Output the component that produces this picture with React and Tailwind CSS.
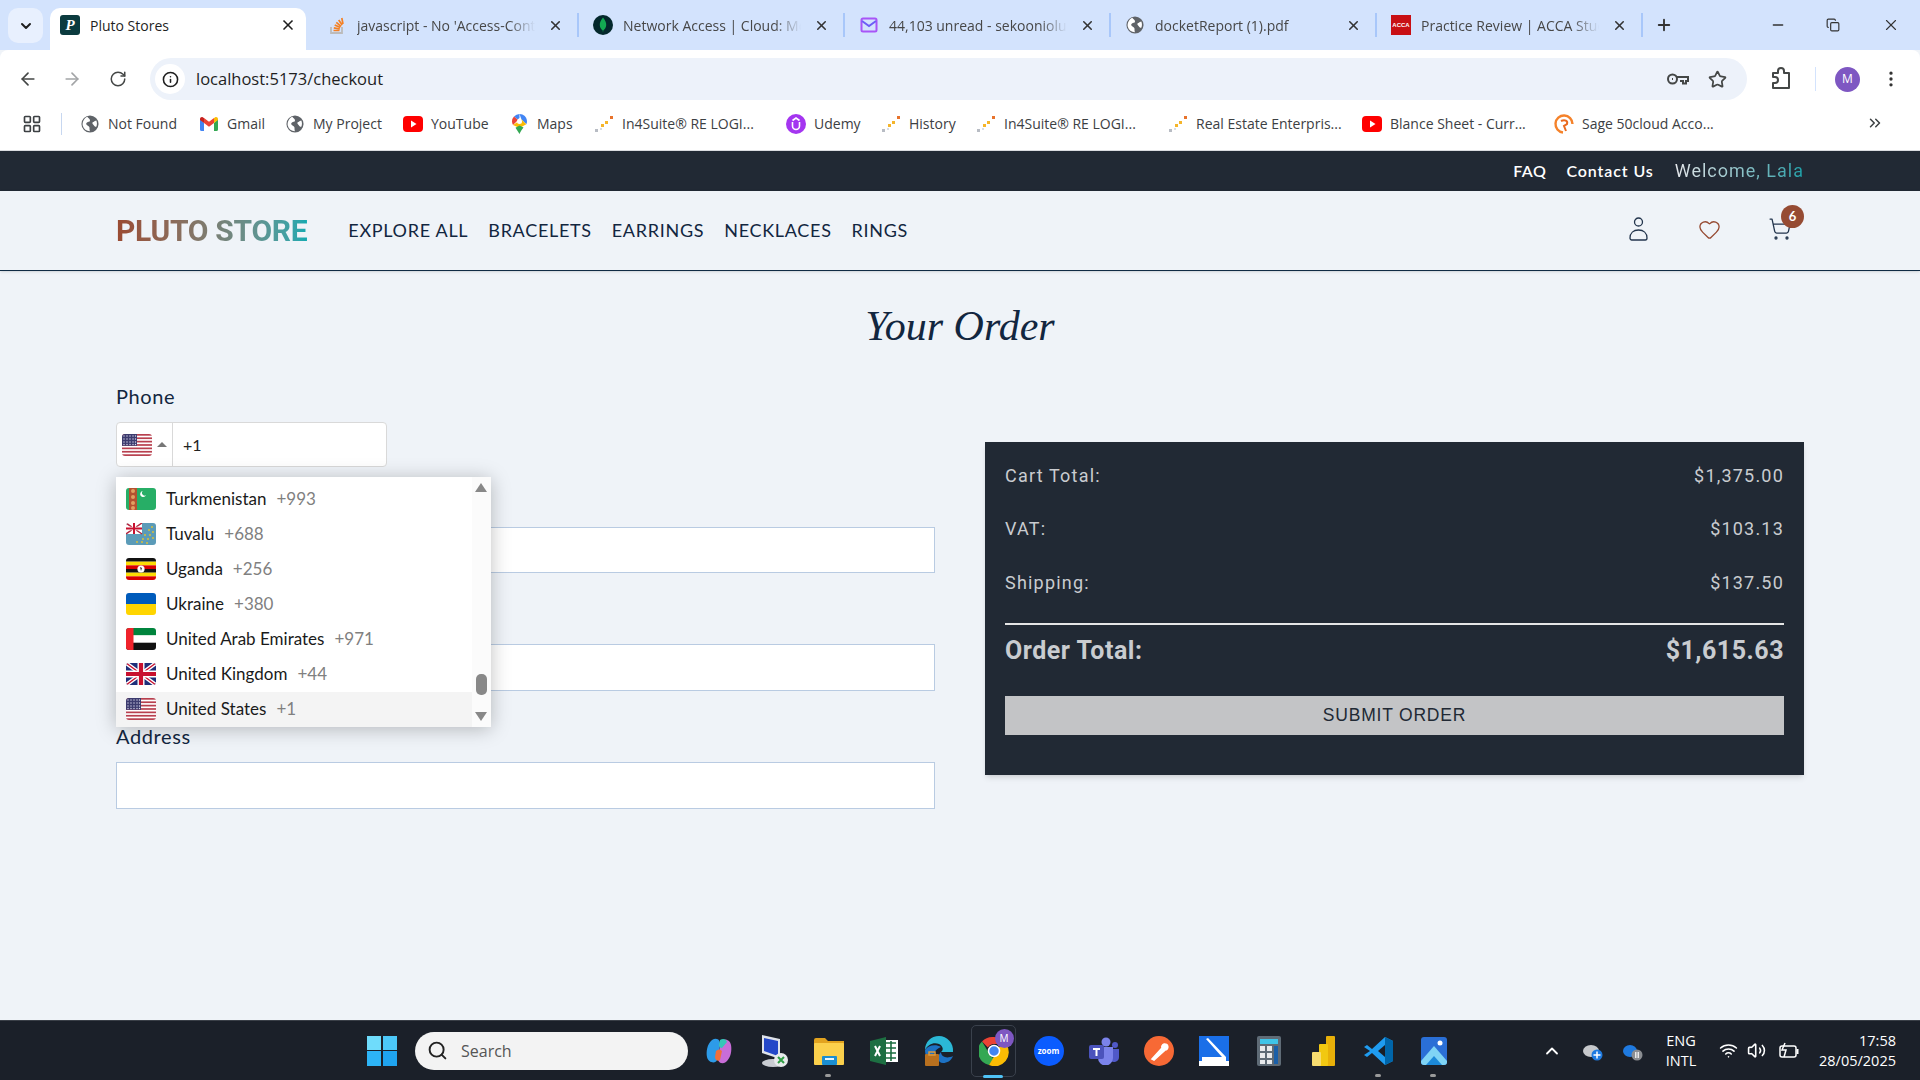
import {
  ArrowLeft, ArrowRight, RotateCw, Info, Star, EllipsisVertical, X, Plus, Minus, Copy,
  ChevronDown, ChevronsRight, LayoutGrid, Search, ChevronUp, Wifi, Volume2, Heart, ShoppingCart,
} from "lucide-react";

const PlutoIcon = () => (
  <div className="w-5 h-5 rounded-[3px] bg-[#0b3b3f] text-white flex items-center justify-center font-['Liberation_Serif',serif] italic font-bold text-[15px]">P</div>
);
const StackIcon = () => (
  <svg width="20" height="20" viewBox="0 0 20 20" fill="none">
    <path d="M4 12v6h11v-6" stroke="#bcbbbb" strokeWidth="1.8" />
    <path d="M6.5 15.5h6M6.8 12.8l6 1.2M7.7 10l5.6 2.6M9.3 7.3l4.8 4M11.7 4.9l3.5 5M14.8 3l1.2 6" stroke="#f48024" strokeWidth="1.7" />
  </svg>
);
const MongoIcon = () => (
  <svg width="20" height="20" viewBox="0 0 20 20">
    <circle cx="10" cy="10" r="10" fill="#04282c" />
    <path d="M10 2.5c2.6 3 3.4 5.5 3.2 7.8-.2 2.5-1.7 4.3-2.8 5l-.4 2.2-.4-2.2c-1.3-.8-2.7-2.6-2.8-5C6.600 8 7.500 5.500 10 2.500z" fill="#13aa52" />
  </svg>
);
const MailIcon = () => (
  <svg width="20" height="20" viewBox="0 0 20 20" fill="none">
    <rect x="2.500" y="3.500" width="15" height="13" rx="1.500" stroke="#a855f7" strokeWidth="2" />
    <path d="M3 6l7 5 7-5" stroke="#6d5df6" strokeWidth="2" />
  </svg>
);
const AccaIcon = () => (
  <div className="w-5 h-5 bg-[#c80f14] text-white flex items-center justify-center font-['Liberation_Sans',sans-serif] font-bold text-[6px]">ACCA</div>
);
const GlobeGray = ({ s = 18 }) => (
  <svg width={s} height={s} viewBox="0 0 20 20">
    <circle cx="10" cy="10" r="9.500" fill="#5f6368" />
    <path d="M7 2c1 2 3 2 3 4s-3 1-4 3 2 3 3 4 0 3 1 5c-4 0-7-2-8-6s2-9 5-10zM13 8c2-1 3-2 4-2 1 2 1 5 0 7-2 0-2-1-3-2s-2-2-1-3z" fill="#fff" />
  </svg>
);
const GmailIcon = () => (
  <svg width="18" height="14" viewBox="0 0 18 14">
    <path d="M0 2v10.500A1.500 1.500 0 0 0 1.500 14H4V6z" fill="#4285f4" />
    <path d="M18 2v10.500a1.500 1.500 0 0 1-1.500 1.500H14V6z" fill="#34a853" />
    <path d="M14 1v5l4-3V2c0-1.800-2-2.500-3-1.500z" fill="#fbbc04" />
    <path d="M4 6V1l5 3.800L14 1v5L9 9.800z" fill="#ea4335" />
    <path d="M0 2v1l4 3V1L3 .500C2 -.500 0 .200 0 2z" fill="#c5221f" />
  </svg>
);
const YoutubeIcon = () => (
  <svg width="20" height="16" viewBox="0 0 20 16">
    <rect width="20" height="16" rx="4" fill="#f00" />
    <path d="M8 4.500v7l5.500-3.500z" fill="#fff" />
  </svg>
);
const MapsIcon = () => (
  <svg width="15" height="20" viewBox="0 0 15 20">
    <path d="M7.500 0A7.500 7.500 0 0 0 2 2.500l3.500 3L7.500 4z" fill="#4285f4" />
    <path d="M2 2.500A7 7 0 0 0 0 7.500c0 1.300.4 2.500 1 3.500l5-5z" fill="#ea4335" />
    <path d="M7.500 0c4 0 7.500 3 7.500 7.500 0 1-.3 2-.7 2.800L9.500 5.500z" fill="#4285f4" />
    <path d="M1 11l8.500-5.500 4.800 4.800L7.500 14z" fill="#fbbc04" />
    <path d="M3.500 13.800L7.500 20c1-2.500 2.500-4.500 4-6.500l-4-2z" fill="#34a853" />
    <circle cx="7.500" cy="7.500" r="2.500" fill="#fff" />
  </svg>
);
const DotsIcon = () => (
  <svg width="20" height="18" viewBox="0 0 20 18">
    <rect x="1" y="14" width="3" height="3" fill="#b8bcc4" />
    <rect x="7" y="9" width="3" height="3" fill="#f5b52a" />
    <rect x="11" y="6" width="3" height="3" fill="#f5b52a" />
    <rect x="6" y="13" width="2" height="2" fill="#d9dde3" />
    <rect x="16" y="1" width="3" height="3" fill="#e8732c" />
  </svg>
);
const UdemyIcon = () => (
  <svg width="20" height="20" viewBox="0 0 20 20">
    <circle cx="10" cy="10" r="10" fill="#a435f0" />
    <path d="M6.500 8v4a3.500 3.500 0 0 0 7 0V8M6.500 6.500L10 4l3.500 2.500" fill="none" stroke="#fff" strokeWidth="1.600" />
  </svg>
);
const SageIcon = () => (
  <svg width="20" height="20" viewBox="0 0 20 20" fill="none">
    <path d="M9 18.500A8.500 8.500 0 1 1 18.500 10" stroke="#f5822a" strokeWidth="2.400" />
    <path d="M7 7c4-2 7 0 6 3l-3 2 2 5" stroke="#ea6a1f" strokeWidth="2" />
  </svg>
);
const KeyIcon = () => (
  <svg width="24" height="16" viewBox="0 0 24 16" fill="none" stroke="#444746" strokeWidth="2">
    <circle cx="6.500" cy="8" r="4.500" />
    <path d="M11 6h11v4h-2v2.500h-3V10h-3M6 8h1" />
  </svg>
);
const ExtensionIcon = () => (
  <svg width="22" height="24" viewBox="0 0 22 24" fill="none" stroke="#444746" strokeWidth="2" strokeLinejoin="round">
    <path d="M3 6h5V4a3 3 0 0 1 6 0v2h5v15H3v-5h2a3 3 0 0 0 0-6H3z" />
  </svg>
);
const UserIcon = () => (
  <svg width="19" height="24" viewBox="0 0 19 24" fill="none" stroke="#23354d" strokeWidth="1.300">
    <circle cx="9.500" cy="5" r="4" />
    <path d="M1 21c0-5 3.500-8 8.500-8s8.500 3 8.500 8c0 1-.7 2-1.700 2H2.700C1.700 23 1 22 1 21z" />
  </svg>
);

const tabs = [
  { Icon: StackIcon, label: "javascript - No 'Access-Control-Allow-Origin'" },
  { Icon: MongoIcon, label: "Network Access | Cloud: MongoDB Cloud" },
  { Icon: MailIcon, label: "44,103 unread - sekooniolu@yahoo.com" },
  { Icon: GlobeGray, label: "docketReport (1).pdf" },
  { Icon: AccaIcon, label: "Practice Review | ACCA Study Hub" },
];

const bookmarks = [
  { Icon: GlobeGray, label: "Not Found", w: "w-[119px]" },
  { Icon: GmailIcon, label: "Gmail", w: "w-[86px]" },
  { Icon: GlobeGray, label: "My Project", w: "w-[118px]" },
  { Icon: YoutubeIcon, label: "YouTube", w: "w-[106px]" },
  { Icon: MapsIcon, label: "Maps", w: "w-[85px]" },
  { Icon: DotsIcon, label: "In4Suite® RE LOGI...", w: "w-[192px]" },
  { Icon: UdemyIcon, label: "Udemy", w: "w-[95px]" },
  { Icon: DotsIcon, label: "History", w: "w-[95px]" },
  { Icon: DotsIcon, label: "In4Suite® RE LOGI...", w: "w-[192px]" },
  { Icon: DotsIcon, label: "Real Estate Enterpris...", w: "w-[194px]" },
  { Icon: YoutubeIcon, label: "Blance Sheet - Curr...", w: "w-[192px]" },
  { Icon: SageIcon, label: "Sage 50cloud Acco...", w: "w-[160px]" },
];

function UsFlag() {
  return (
    <svg viewBox="0 0 30 22" className="w-[30px] h-[22px] rounded-[3px]">
      <rect width="30" height="22" fill="#fff" />
      {[0, 1, 2, 3, 4, 5, 6].map((i) => (
        <rect key={i} y={i * 3.38} width="30" height="1.700" fill="#b8404f" />
      ))}
      <rect width="15" height="11.800" fill="#3c3b6e" />
      {[2, 5, 8, 11, 13.500].map((x) =>
        [2, 5, 8, 10.500].map((y) => <circle key={`${x}-${y}`} cx={x} cy={y} r="0.700" fill="#d8d8ea" />)
      )}
    </svg>
  );
}
function TurkmenFlag() {
  return (
    <svg viewBox="0 0 30 22" className="w-[30px] h-[22px] rounded-[3px]">
      <rect width="30" height="22" fill="#27ae66" />
      <rect x="3" width="8" height="22" fill="#b5512f" />
      {[3, 9, 15, 20].map((y) => <circle key={y} cx="7" cy={y} r="2" fill="#e0a060" />)}
      <path d="M17 3a3 3 0 1 0 3 4 2.500 2.500 0 1 1-3-4z" fill="#fff" />
    </svg>
  );
}
function TuvaluFlag() {
  return (
    <svg viewBox="0 0 30 22" className="w-[30px] h-[22px] rounded-[3px]">
      <rect width="30" height="22" fill="#5b9bb8" />
      <rect width="16" height="11" fill="#fff" />
      <path d="M0 0l16 11M16 0L0 11" stroke="#b3273f" strokeWidth="1.500" />
      <path d="M8 0v11M0 5.500h16" stroke="#fff" strokeWidth="3.400" />
      <path d="M8 0v11M0 5.500h16" stroke="#c8102e" strokeWidth="2" />
      {[[26, 4], [23, 7], [27, 9], [19, 12], [24, 12], [17, 16], [22, 16], [27, 15], [11, 19], [16, 19], [21, 20]].map(([x, y]) => (
        <circle key={`${x}-${y}`} cx={x} cy={y} r="0.900" fill="#e8c32a" />
      ))}
    </svg>
  );
}
function UgandaFlag() {
  const c = ["#111", "#fcdc04", "#d90000", "#111", "#fcdc04", "#d90000"];
  return (
    <svg viewBox="0 0 30 22" className="w-[30px] h-[22px] rounded-[3px]">
      {c.map((col, i) => <rect key={i} y={i * 3.667} width="30" height="3.700" fill={col} />)}
      <circle cx="15" cy="11" r="3.600" fill="#fff" />
      <path d="M14 9l2 1-1 3z" fill="#333" />
    </svg>
  );
}
function UkraineFlag() {
  return (
    <svg viewBox="0 0 30 22" className="w-[30px] h-[22px] rounded-[3px]">
      <rect width="30" height="11" fill="#005bbb" />
      <rect y="11" width="30" height="11" fill="#ffd500" />
    </svg>
  );
}
function UaeFlag() {
  return (
    <svg viewBox="0 0 30 22" className="w-[30px] h-[22px] rounded-[3px]">
      <rect width="30" height="7.400" fill="#00843d" />
      <rect y="7.400" width="30" height="7.300" fill="#fff" />
      <rect y="14.700" width="30" height="7.300" fill="#111" />
      <rect width="7.500" height="22" fill="#f0222b" />
    </svg>
  );
}
function UkFlag() {
  return (
    <svg viewBox="0 0 30 22" className="w-[30px] h-[22px] rounded-[3px]">
      <rect width="30" height="22" fill="#1f2f7a" />
      <path d="M0 0l30 22M30 0L0 22" stroke="#fff" strokeWidth="4" />
      <path d="M0 0l30 22M30 0L0 22" stroke="#c8102e" strokeWidth="1.400" />
      <path d="M15 0v22M0 11h30" stroke="#fff" strokeWidth="7" />
      <path d="M15 0v22M0 11h30" stroke="#c8102e" strokeWidth="4.200" />
    </svg>
  );
}

const countries = [
  { Flag: TurkmenFlag, name: "Turkmenistan", code: "+993" },
  { Flag: TuvaluFlag, name: "Tuvalu", code: "+688" },
  { Flag: UgandaFlag, name: "Uganda", code: "+256" },
  { Flag: UkraineFlag, name: "Ukraine", code: "+380" },
  { Flag: UaeFlag, name: "United Arab Emirates", code: "+971" },
  { Flag: UkFlag, name: "United Kingdom", code: "+44" },
  { Flag: UsFlag, name: "United States", code: "+1", active: true },
];

const totals = [
  { label: "Cart Total:", value: "$1,375.00" },
  { label: "VAT:", value: "$103.13" },
  { label: "Shipping:", value: "$137.50" },
];

function TabBar() {
  return (
    <div className="h-[50px] bg-[#d3e3fd] flex items-end relative shrink-0">
      <div className="absolute left-[8px] top-[8px] w-[35px] h-[35px] rounded-[10px] bg-[#e8f0fe] flex items-center justify-center">
        <ChevronDown size={16} strokeWidth={3} className="text-[#1f1f1f]" />
      </div>
      <div className="ml-[50px] w-[256px] h-[42px] bg-white rounded-t-[10px] flex items-center pl-[10px] pr-[10px] pb-[8px] text-[14px] text-[#1f1f1f]">
        <PlutoIcon />
        <span className="ml-[10px] flex-1">Pluto Stores</span>
        <X size={16} strokeWidth={2.500} />
      </div>
      <div className="h-[42px] flex items-center pl-[7px] pb-[8px]">
        {tabs.map(({ Icon, label }) => (
          <div key={label} className="w-[266px] flex items-center text-[14px] text-[#474747] border-r-2 border-[#a8c7fa] h-[24px] pl-[14px]">
            <div className="w-5 h-5 flex items-center justify-center shrink-0"><Icon /></div>
            <span className="ml-[10px] w-[178px] overflow-hidden whitespace-nowrap [mask-image:linear-gradient(to_right,black_85%,transparent)]">{label}</span>
            <X size={15} strokeWidth={2.500} className="ml-[13px] text-[#333]" />
          </div>
        ))}
        <Plus size={18} strokeWidth={2.500} className="ml-[12px] text-[#333]" />
      </div>
      <div className="absolute top-[16px] right-0 flex items-center text-[#333]">
        <Minus size={16} className="mr-[40px]" />
        <Copy size={14} className="mr-[42px]" />
        <X size={18} strokeWidth={1.500} className="mr-[20px]" />
      </div>
    </div>
  );
}

function Toolbar() {
  return (
    <div className="h-[50px] pt-[8px] bg-white rounded-t-[8px] flex items-center shrink-0 text-[#444746]">
      <ArrowLeft size={20} className="ml-[18px]" />
      <ArrowRight size={20} className="ml-[24px] text-[#a3a5a7]" />
      <RotateCw size={18} className="ml-[27px]" />
      <div className="ml-[23px] w-[1597px] h-[42px] rounded-full bg-[#edf2fa] flex items-center pl-[5px] pr-[20px]">
        <div className="w-[30px] h-[30px] bg-white rounded-full flex items-center justify-center">
          <Info size={17} strokeWidth={2.200} className="text-[#1f1f1f]" />
        </div>
        <span className="ml-[11px] flex-1 text-[16.500px] text-[#1f1f1f]">localhost:5173/checkout</span>
        <KeyIcon />
        <Star size={19} strokeWidth={2.200} className="ml-[18px]" />
      </div>
      <div className="ml-[23px]"><ExtensionIcon /></div>
      <div className="ml-[23px] w-[1px] h-[24px] bg-[#d3e3fd]" />
      <div className="ml-[19px] w-[25px] h-[25px] rounded-full bg-[#7e57c2] text-white text-[12px] flex items-center justify-center">M</div>
      <EllipsisVertical size={20} className="ml-[21px] text-[#333]" />
    </div>
  );
}

function Bookmarks() {
  return (
    <div className="h-[51px] pb-[3px] bg-white flex items-center shrink-0 border-b border-[#dadce0] relative text-[14px] text-[#3c4043]">
      <LayoutGrid size={20} className="ml-[22px]" />
      <div className="ml-[19px] w-[1px] h-[22px] bg-[#c7d7f0]" />
      <div className="ml-[18px] flex items-center">
        {bookmarks.map(({ Icon, label, w }, i) => (
          <div key={label + i} className={`${w} flex items-center gap-[8px] whitespace-nowrap`}>
            <div className="w-[20px] flex items-center justify-center"><Icon /></div>
            <span>{label}</span>
          </div>
        ))}
      </div>
      <ChevronsRight size={18} className="absolute left-[1866px] top-[14px]" />
    </div>
  );
}

function SiteHeader() {
  return (
    <>
      <div className="h-[40px] pb-[1px] bg-[#212934] shrink-0 flex items-center justify-end pr-[116px] text-white font-[Lato,sans-serif]">
        <span className="text-[16px] font-semibold tracking-[0.500px]">FAQ</span>
        <span className="ml-[20px] text-[16px] font-semibold tracking-[0.900px]">Contact Us</span>
        <span className="ml-[21px] text-[18px] tracking-[1px] font-[Roboto,sans-serif] bg-linear-to-r from-[#e5e7eb] to-[#14a0a8] bg-clip-text text-transparent">Welcome, Lala</span>
      </div>
      <div className="h-[80px] shrink-0 border-b border-[#0f2a44] shadow-sm flex items-center pl-[116px] pr-[116px] relative">
        <span className="text-[30px] font-bold tracking-[-0.300px] font-[Roboto,sans-serif] bg-linear-to-r from-[#9a4a32] to-[#0fa9b0] bg-clip-text text-transparent">PLUTO STORE</span>
        <nav className="ml-[41px] pb-[1px] flex gap-[20px] text-[18px] tracking-[0.700px] text-[#12263f] font-[Lato,sans-serif]">
          <span>EXPLORE ALL</span>
          <span>BRACELETS</span>
          <span>EARRINGS</span>
          <span>NECKLACES</span>
          <span>RINGS</span>
        </nav>
        <div className="ml-auto flex items-center text-[#23354d] mr-[12px] pb-[3px]">
          <UserIcon />
          <Heart size={23} strokeWidth={1.400} className="ml-[50px] text-[#964b33]" />
          <div className="ml-[47px] relative">
            <ShoppingCart size={24} strokeWidth={1.300} />
            <div className="absolute -top-[12px] left-[13px] w-[23px] h-[23px] rounded-full bg-[#964b33] text-white text-[13px] font-bold flex items-center justify-center font-[Lato,sans-serif]">6</div>
          </div>
        </div>
      </div>
    </>
  );
}

function CountryDropdown() {
  return (
    <div className="absolute top-[94px] left-0 w-[375px] h-[250px] bg-white shadow-[0_2px_18px_rgba(0,0,0,0.25)] overflow-hidden pt-[4.500px] z-10 font-[Lato,sans-serif]">
      {countries.map(({ Flag, name, code, active }) => (
        <div key={name} className={`h-[35px] w-[356px] flex items-center pl-[10px] ${active ? "bg-[#f4f4f4]" : ""}`}>
          <Flag />
          <span className="ml-[10px] text-[17px] text-[#1a1a1a]">{name}</span>
          <span className="ml-[10px] text-[17px] text-[#808080]">{code}</span>
        </div>
      ))}
      <div className="absolute right-0 top-0 bottom-0 w-[19px] bg-[#fbfbfb]">
        <div className="absolute left-[3px] top-[6px] w-0 h-0 border-x-[6px] border-x-transparent border-b-[9px] border-b-[#888]" />
        <div className="absolute left-[4px] top-[197px] w-[11px] h-[21px] rounded-[5px] bg-[#888]" />
        <div className="absolute left-[3px] top-[235px] w-0 h-0 border-x-[6px] border-x-transparent border-t-[9px] border-t-[#888]" />
      </div>
    </div>
  );
}

function CheckoutForm() {
  const label = "block h-[26px] mb-[13px] text-[20px] leading-[26px] tracking-[0.600px] text-[#12263f] font-[Lato,sans-serif]";
  const input = "w-full border border-[#b9cbe2] bg-white block";
  return (
    <div className="relative">
      <div className="mb-[21px]">
        <span className={label}>Phone</span>
        <div className="w-[271px] h-[45px] bg-white border border-[#d9d9d9] rounded-[4px] flex items-center">
          <div className="w-[56px] h-full border-r border-[#d9d9d9] flex items-center pl-[5px]">
            <UsFlag />
            <div className="ml-[5px] w-0 h-0 border-x-[5px] border-x-transparent border-b-[5px] border-b-[#777]" />
          </div>
          <span className="ml-[10px] text-[16px] text-[#222] font-[Lato,sans-serif]">+1</span>
        </div>
      </div>
      <CountryDropdown />
      <div className="mb-[32px]">
        <span className={label}>Name</span>
        <div className={`${input} h-[46px]`} />
      </div>
      <div className="mb-[32px]">
        <span className={label}>Email</span>
        <div className={`${input} h-[47px]`} />
      </div>
      <div>
        <span className={label}>Address</span>
        <div className={`${input} h-[47px]`} />
      </div>
    </div>
  );
}

function OrderSummary() {
  return (
    <div className="mt-[59px] h-[333px] bg-[#212934] shadow-md px-[20px] pt-[20px] font-[Roboto,sans-serif] text-[#c9ccd0]">
      {totals.map(({ label, value }) => (
        <div key={label} className="h-[26px] mb-[27.500px] flex justify-between items-center text-[18px] tracking-[1.200px]">
          <span>{label}</span>
          <span>{value}</span>
        </div>
      ))}
      <div className="h-[2px] bg-[#e5e5e5] mt-[0.500px]" />
      <div className="h-[36px] mt-[8px] flex justify-between items-center text-[25px] font-bold tracking-[0.500px]">
        <span>Order Total:</span>
        <span>$1,615.63</span>
      </div>
      <div className="mt-[27px] h-[39px] bg-[#c3c4c6] text-[#212934] flex items-center justify-center text-[17.500px] tracking-[0.800px] font-['Liberation_Sans',sans-serif]">
        SUBMIT ORDER
      </div>
    </div>
  );
}

const taskIcons = [
  <svg key="copilot" width="30" height="30" viewBox="0 0 30 30">
    <path d="M8 4c5-3 9 0 8 6l-3 14c-1 4-9 3-10-3-1-5 0-13 5-17z" fill="#2d9be8" />
    <path d="M22 26c-5 3-9 0-8-6l3-14c1-4 9-3 10 3 1 5 0 13-5 17z" fill="#c86dd8" />
    <path d="M12 15c2-2 4-2 6 0l-2 9c-2 2-5 0-5-3z" fill="#f0703c" />
    <path d="M16 4c3-2 6-1 7 2l-5 6c-2 0-3-1-3-3z" fill="#35c6b8" />
  </svg>,
  <svg key="rdp" width="30" height="36" viewBox="0 0 30 36">
    <path d="M3 2l18 4v20L3 20z" fill="#dfe3ea" />
    <path d="M5 5l14 3v15L5 18z" fill="#2447c8" />
    <ellipse cx="14" cy="30" rx="11" ry="4" fill="#c9ccd2" />
    <circle cx="22" cy="27" r="7" fill="#e8eaec" />
    <path d="M19 24l6 6M25 24l-6 6" stroke="#2f9e44" strokeWidth="2" />
  </svg>,
  <svg key="folder" width="30" height="28" viewBox="0 0 30 28">
    <path d="M0 3a2 2 0 0 1 2-2h9l3 3h16v5H0z" fill="#e2a31f" />
    <rect y="6" width="30" height="22" rx="1" fill="#fbd04c" />
    <rect x="8" y="19" width="15" height="9" rx="1" fill="#1b8ed1" />
    <rect x="11" y="21" width="9" height="2" fill="#e8f4fb" />
  </svg>,
  <svg key="excel" width="28" height="28" viewBox="0 0 28 28">
    <rect x="10" y="3" width="18" height="22" fill="#fff" />
    <path d="M16 6h10M16 11h10M16 16h10M16 21h10M21 4v20" stroke="#1d6f42" strokeWidth="1.600" />
    <path d="M0 4l16-4v28L0 24z" fill="#1d6f42" />
    <path d="M5 9l5 10M10 9l-5 10" stroke="#fff" strokeWidth="2" />
  </svg>,
  <svg key="edge" width="30" height="32" viewBox="0 0 30 32">
    <path d="M15 1C7 1 1 7 1 15c3-6 9-8 14-6 4 2 5 6 2 8h12c1-9-6-16-14-16z" fill="#2bb8d6" />
    <path d="M1 15c0 6 3 10 7 12 0-7 3-13 9-15-5-3-13-2-16 3z" fill="#1d72c4" />
    <path d="M17 17c0 5 6 7 12 4-2 5-6 7-10 7-5 0-7-6-2-11z" fill="#1d72c4" />
    <rect x="1" y="19" width="14" height="12" rx="1" fill="#b8701f" />
    <rect x="5" y="17" width="6" height="3" fill="none" stroke="#d9993f" strokeWidth="1.500" />
  </svg>,
  <div key="chrome" className="relative w-[30px] h-[30px]">
    <svg width="30" height="30" viewBox="0 0 30 30">
      <path d="M15 1a14 14 0 0 1 12.100 7H15a7 7 0 0 0-6.100 3.500L3 5.500A14 14 0 0 1 15 1z" fill="#ea4335" />
      <path d="M3 5.500l6 10 .1.100a7 7 0 0 0 6.600 6.400L10 29A14 14 0 0 1 3 5.500z" fill="#34a853" />
      <path d="M27.100 8A14 14 0 0 1 10 29l6-10a7 7 0 0 0 3.500-8z" fill="#fbbc04" />
      <circle cx="15" cy="15" r="5.500" fill="#4285f4" stroke="#fff" strokeWidth="1.500" />
    </svg>
    <div className="absolute -top-[7px] left-[16px] w-[19px] h-[19px] rounded-full bg-[#7e57c2] text-white text-[10px] flex items-center justify-center">M</div>
  </div>,
  <div key="zoom" className="w-[30px] h-[30px] rounded-full bg-[#0b5cff] text-white text-[8px] font-bold flex items-center justify-center">zoom</div>,
  <svg key="teams" width="30" height="28" viewBox="0 0 30 28">
    <circle cx="17" cy="5" r="4.500" fill="#7b83eb" />
    <circle cx="26" cy="8" r="3" fill="#5059c9" />
    <path d="M21 12h9v8a5 5 0 0 1-9 3z" fill="#5059c9" />
    <path d="M9 10h15v11a7 7 0 0 1-15 0z" fill="#7b83eb" />
    <rect y="8" width="15" height="14" rx="2" fill="#4b53bc" />
    <path d="M4 12h7M7.500 12v7" stroke="#fff" strokeWidth="2" />
  </svg>,
  <svg key="postman" width="30" height="30" viewBox="0 0 30 30">
    <circle cx="15" cy="15" r="15" fill="#f76935" />
    <path d="M8 23l10-11 3 2-11 10zM18 12a3 3 0 1 1 3 2" stroke="#fff" strokeWidth="1.600" fill="#fff" />
  </svg>,
  <svg key="scan" width="30" height="30" viewBox="0 0 30 30">
    <rect width="30" height="30" fill="#1a6fe8" />
    <path d="M9 2l18 19v4H3v-4h20L7 3z" fill="#fff" />
    <rect x="3" y="17" width="16" height="2" fill="#1a6fe8" />
    <rect y="25" width="30" height="5" fill="#fff" />
  </svg>,
  <svg key="calc" width="24" height="30" viewBox="0 0 24 30">
    <rect width="24" height="30" rx="2" fill="#5f6b76" />
    <rect x="3" y="3" width="18" height="5" fill="#3fc4e8" />
    <rect x="3" y="10" width="5" height="5" fill="#e8eaec" />
    <rect x="10" y="10" width="5" height="5" fill="#e8eaec" />
    <rect x="3" y="17" width="5" height="5" fill="#e8eaec" />
    <rect x="10" y="17" width="5" height="5" fill="#e8eaec" />
    <rect x="3" y="24" width="5" height="4" fill="#e8eaec" />
    <rect x="10" y="24" width="5" height="4" fill="#e8eaec" />
    <rect x="17" y="10" width="4" height="18" fill="#1a5fa8" />
  </svg>,
  <svg key="bi" width="24" height="30" viewBox="0 0 24 30">
    <rect x="14" width="9" height="30" rx="1" fill="#e8b009" />
    <rect x="7" y="8" width="9" height="22" rx="1" fill="#f2c811" />
    <rect y="16" width="9" height="14" rx="1" fill="#f7dc6f" />
  </svg>,
  <svg key="vscode" width="30" height="30" viewBox="0 0 30 30">
    <path d="M21 1l8 4v20l-8 4L8 17l-5 4-3-2 6-4-6-4 3-2 5 4z" fill="#1f9cf0" />
    <path d="M21 1l8 4v20l-8 4z" fill="#0065a9" />
    <path d="M21 9l-7 6 7 6z" fill="#1a1f27" />
  </svg>,
  <svg key="photos" width="26" height="28" viewBox="0 0 26 28">
    <rect width="26" height="28" rx="3" fill="#2a6fd6" />
    <circle cx="19" cy="6" r="2.500" fill="#fff" />
    <path d="M0 24L13 9l13 15v1a3 3 0 0 1-3 3H3a3 3 0 0 1-3-3z" fill="#7fd4f5" />
    <path d="M5 28l8-9 8 9z" fill="#1c89d8" />
  </svg>,
];

function Taskbar() {
  return (
    <div className="h-[60px] shrink-0 bg-[#1b2029] border-t border-[#3a3f47] flex items-center text-white relative">
      <div className="ml-[367px] w-[30px] h-[30px] grid grid-cols-2 gap-[1.500px]">
        <div className="bg-[#6fdcfb]" />
        <div className="bg-[#4cc8f8]" />
        <div className="bg-[#2db4f6]" />
        <div className="bg-[#1fa4f0]" />
      </div>
      <div className="ml-[18px] w-[273px] h-[38px] rounded-full bg-[#f3f3f3] flex items-center pl-[12px] text-[#555] text-[16px]">
        <Search size={21} strokeWidth={2.200} className="text-[#222]" />
        <span className="ml-[13px]">Search</span>
      </div>
      <div className="ml-[3px] flex items-center">
        {taskIcons.map((icon, i) => (
          <div key={i} className="w-[55px] h-[58px] flex items-center justify-center relative">
            {icon}
            {i === 5 && <div className="absolute inset-x-[5px] inset-y-[3px] border border-[#3a414c] rounded-[5px]" />}
            {i === 5 && <div className="absolute bottom-[2px] left-[17px] w-[20px] h-[3px] rounded-full bg-[#4fc3f7]" />}
            {(i === 2 || i === 12 || i === 13) && <div className="absolute bottom-[3px] left-[24px] w-[6px] h-[3px] rounded-full bg-[#9a9a9a]" />}
          </div>
        ))}
      </div>
      <div className="ml-auto flex items-center pr-[24px] text-[14.500px]">
        <ChevronUp size={20} strokeWidth={2.200} />
        <svg width="22" height="20" viewBox="0 0 22 20" className="ml-[20px]">
          <ellipse cx="9" cy="10" rx="8" ry="6" fill="#c7c9cc" />
          <circle cx="15" cy="14" r="5.500" fill="#1f7ae0" />
          <path d="M15 10.500v7M11.500 14h7" stroke="#fff" strokeWidth="1.500" />
        </svg>
        <svg width="22" height="20" viewBox="0 0 22 20" className="ml-[18px]">
          <ellipse cx="8" cy="10" rx="7" ry="6" fill="#1f7ae0" />
          <circle cx="15" cy="14" r="5.500" fill="#8a8d91" />
          <path d="M13.800 11v6M16.200 11v6" stroke="#fff" strokeWidth="1.200" />
        </svg>
        <div className="ml-[14px] w-[46px] text-center leading-[20px]">
          <div>ENG</div>
          <div>INTL</div>
        </div>
        <Wifi size={19} className="ml-[15px]" />
        <Volume2 size={19} className="ml-[9px]" />
        <svg width="20" height="18" viewBox="0 0 20 18" fill="none" className="ml-[13px]">
          <rect x="1" y="4" width="16" height="11" rx="2" stroke="#fff" strokeWidth="1.500" />
          <rect x="17.500" y="7" width="2" height="5" fill="#fff" />
          <path d="M6 1L3 8h4l-2 7" stroke="#fff" strokeWidth="1.500" />
        </svg>
        <div className="ml-[20px] text-right leading-[20px]">
          <div>17:58</div>
          <div>28/05/2025</div>
        </div>
      </div>
    </div>
  );
}

export default function App() {
  return (
    <div className="h-screen overflow-hidden flex flex-col bg-[#eff3f8] font-['Open_Sans',sans-serif]">
      <TabBar />
      <Toolbar />
      <Bookmarks />
      <SiteHeader />
      <main className="flex-1 pl-[116px] pr-[116px]">
        <h1 className="h-[112px] pt-[29px] text-center text-[42px] leading-[52px] italic text-[#12263f] font-['Liberation_Serif',serif]">Your Order</h1>
        <div className="grid grid-cols-[819px_819px] gap-x-[50px] items-start">
          <CheckoutForm />
          <OrderSummary />
        </div>
      </main>
      <Taskbar />
    </div>
  );
}
